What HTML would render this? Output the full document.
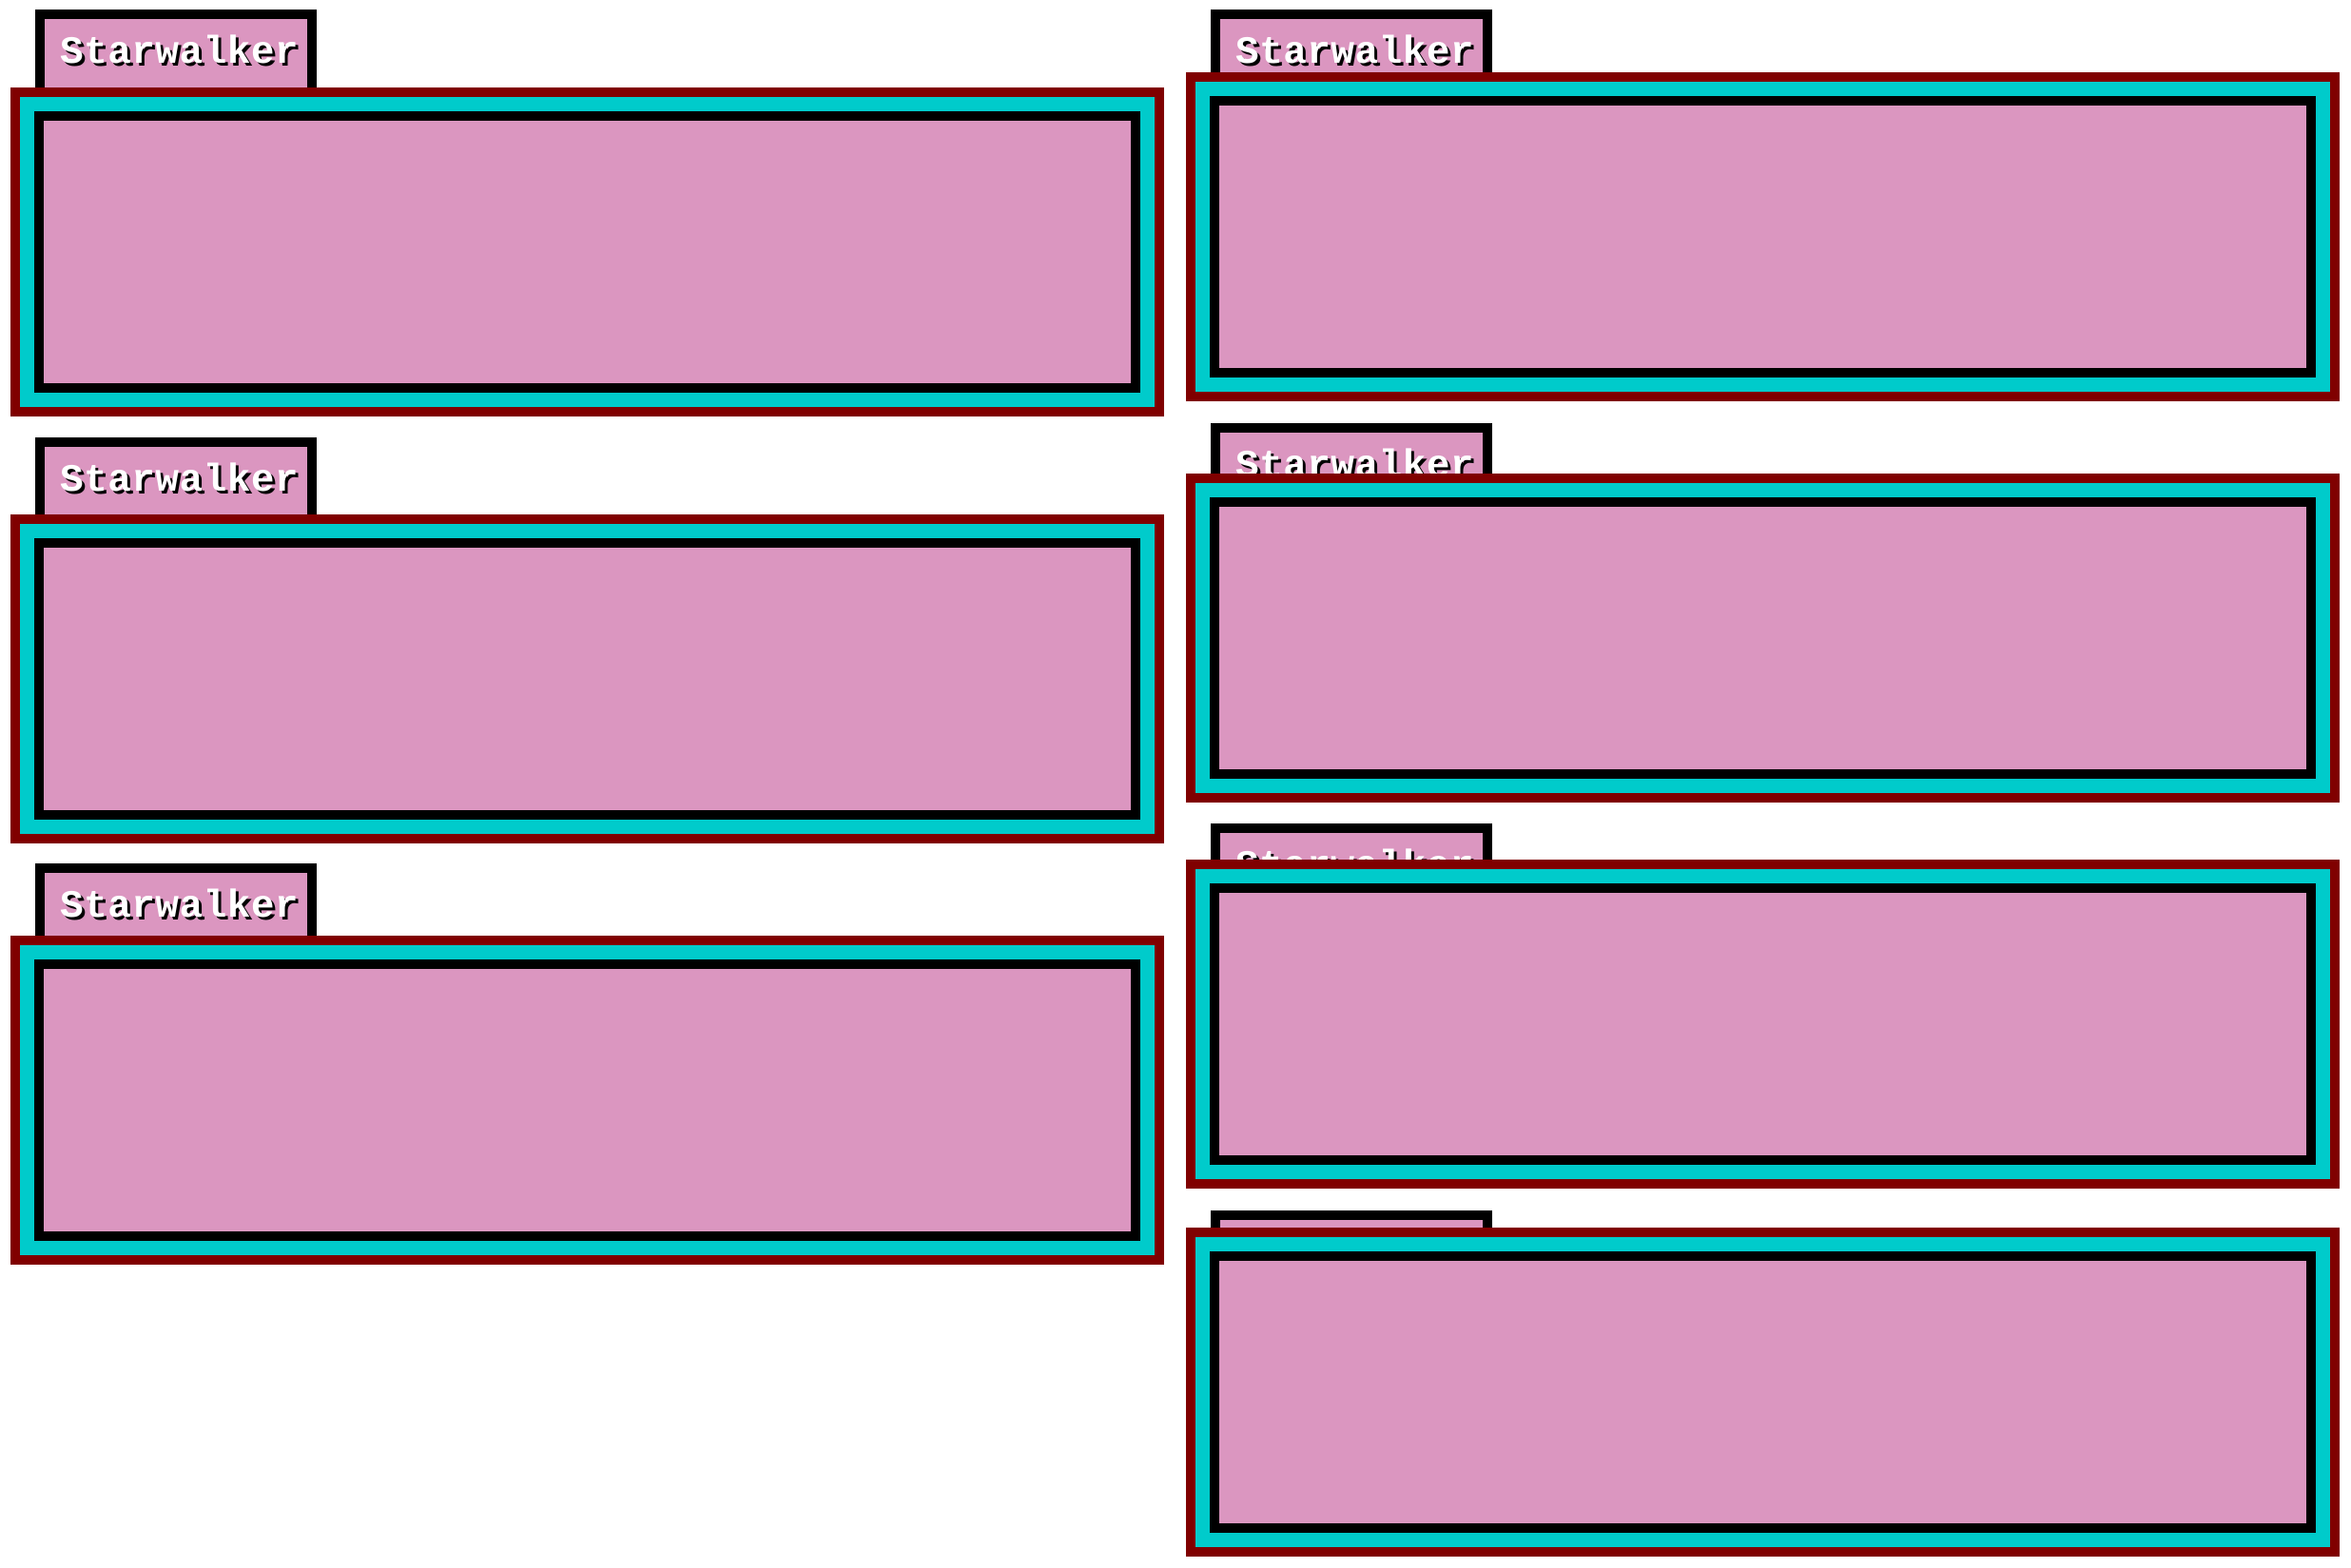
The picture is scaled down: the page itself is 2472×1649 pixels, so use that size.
<!DOCTYPE html>
<html><head><meta charset="utf-8"><style>
html,body{margin:0;padding:0;background:#fff;width:2472px;height:1649px;overflow:hidden;position:relative}
.tab{position:absolute;width:276px;height:120px;background:#db96c0;border:10px solid #000;box-sizing:content-box}
.tab span{position:absolute;left:16px;top:16px;font-family:"Liberation Mono",monospace;font-weight:bold;font-size:41px;color:#fff;text-shadow:3px 3px 0 #000;letter-spacing:0.5px;line-height:40px}
.box{position:absolute;width:1193px;height:326px;border:10px solid #800000;background:#00cbcb;box-sizing:content-box}
.box div{position:absolute;left:15px;top:15px;right:15px;bottom:15px;border:10px solid #000;background:#db96c0}
</style></head><body>
<div class="tab" style="left:37px;top:10px"><span>Starwalker</span></div>
<div class="box" style="left:11px;top:92px"><div></div></div>
<div class="tab" style="left:37px;top:460px"><span>Starwalker</span></div>
<div class="box" style="left:11px;top:541px"><div></div></div>
<div class="tab" style="left:37px;top:908px"><span>Starwalker</span></div>
<div class="box" style="left:11px;top:984px"><div></div></div>

<div class="tab" style="left:1273px;top:10px"><span>Starwalker</span></div>
<div class="box" style="left:1247px;top:76px"><div></div></div>
<div class="tab" style="left:1273px;top:445px"><span>Starwalker</span></div>
<div class="box" style="left:1247px;top:498px"><div></div></div>
<div class="tab" style="left:1273px;top:866px"><span>Starwalker</span></div>
<div class="box" style="left:1247px;top:904px"><div></div></div>
<div class="tab" style="left:1273px;top:1273px"><span>Starwalker</span></div>
<div class="box" style="left:1247px;top:1291px"><div></div></div>
</body></html>
